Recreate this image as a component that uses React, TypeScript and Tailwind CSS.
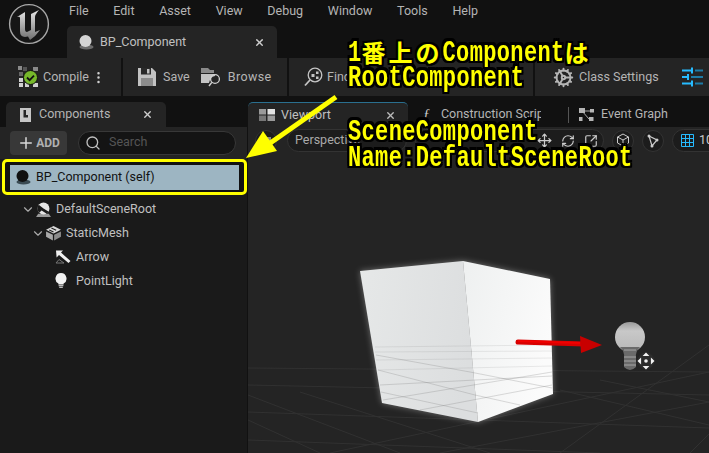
import { X, Search, Plus, ChevronDown, EllipsisVertical, Move, RefreshCw, SquareArrowOutUpRight, Cog } from "lucide-react";

const font = { fontFamily: "Roboto, sans-serif" };

function BallIcon({ dark }: { dark?: boolean }) {
  return (
    <svg width="18" height="18" viewBox="0 0 18 18" className="shrink-0">
      <ellipse cx="9.5" cy="14" rx="7" ry="2.6" fill={dark ? "#3a4a52" : "#6b6b6b"} />
      <circle cx="8.5" cy="8" r="6" fill={dark ? "#111" : "#d4d4d4"} />
    </svg>
  );
}

function Logo() {
  return (
    <svg width="42" height="42" viewBox="0 0 42 42" className="shrink-0">
      <defs>
        <linearGradient id="ulogo" x1="0" y1="0" x2="0" y2="1">
          <stop offset="0" stopColor="#e8e8e8" />
          <stop offset="1" stopColor="#6f6f6f" />
        </linearGradient>
      </defs>
      <circle cx="21" cy="21" r="19.4" fill="#161616" stroke="#a8a8a8" strokeWidth="1.4" />
      <path d="M9 14 L17 9 L17 26 Q17 29 19 29 L23 27 L23 11 L31 7 Q26.5 12 27 15 L27 29 L32 27 Q28 33 22 37 L20 33.5 Q12 35.5 12 28 L12 15 Q12 13 9 14 Z" fill="url(#ulogo)" />
    </svg>
  );
}

function CompileIcon() {
  return (
    <svg width="22" height="22" viewBox="0 0 22 22" className="shrink-0">
      <g fill="#8a8a8a">
        <rect x="0" y="0" width="4" height="4" />
        <rect x="5" y="1" width="4" height="4" fill="#555" />
        <rect x="15" y="1" width="5" height="4" />
      </g>
      <g fill="#cfcfcf">
        <rect x="1" y="6" width="4" height="4" fill="#666" />
        <rect x="1" y="12" width="4" height="4" />
        <rect x="1" y="17" width="4" height="4" />
        <rect x="7" y="17" width="4" height="4" />
        <rect x="15" y="17" width="5" height="4" />
      </g>
      <circle cx="12.5" cy="11.5" r="7" fill="#76b82a" stroke="#111" strokeWidth="1" />
      <path d="M9 11.5 l2.6 2.6 L16 9.6" fill="none" stroke="#111" strokeWidth="1.8" />
    </svg>
  );
}

function SaveIcon() {
  return (
    <svg width="18" height="18" viewBox="0 0 18 18" className="shrink-0">
      <path d="M0 0 H14 L18 4 V18 H0 Z" fill="#c2c2c2" />
      <rect x="3" y="0" width="10" height="6.5" fill="#2a2a2a" />
      <rect x="9" y="1" width="2.5" height="4.5" fill="#c2c2c2" />
      <rect x="3" y="10" width="12" height="8" fill="#8c8c8c" />
    </svg>
  );
}

function BrowseIcon() {
  return (
    <svg width="21" height="20" viewBox="0 0 21 20" className="shrink-0">
      <path d="M0 1 H7 L9 3 H13 V6 H0 Z" fill="#8a8a8a" />
      <path d="M0 7 H14 V9 Q9 10 8 16 H0 Z" fill="#c4c4c4" />
      <circle cx="14" cy="12" r="4.4" fill="none" stroke="#d0d0d0" strokeWidth="1.3" />
      <path d="M10.8 15.4 L8 19" stroke="#d0d0d0" strokeWidth="1.4" />
    </svg>
  );
}

function FindIcon() {
  return (
    <svg width="20" height="20" viewBox="0 0 20 20" className="shrink-0">
      <circle cx="12" cy="8" r="6.8" fill="none" stroke="#c4c4c4" strokeWidth="1.3" />
      <path d="M7 13 L2 18.5" stroke="#c4c4c4" strokeWidth="1.8" />
      <rect x="8.5" y="7" width="3" height="3" fill="#c4c4c4" />
      <rect x="13" y="4.5" width="2.5" height="2.5" fill="#c4c4c4" />
      <rect x="13" y="9.5" width="2.5" height="2.5" fill="#c4c4c4" />
    </svg>
  );
}

function SlidersIcon() {
  const blue = "#26bbff";
  const dim = "#1d7ba6";
  return (
    <svg width="22" height="20" viewBox="0 0 22 20" className="shrink-0">
      <path d="M0 3.5 H10 M0 10 H6 M0 16.5 H10" stroke={blue} strokeWidth="2" />
      <path d="M10 0.5 V6.5 M6 7 V13 M10 13.5 V19.5" stroke={blue} strokeWidth="2" />
      <path d="M13 3.5 H21 M9 10 H21 M13 16.5 H21" stroke={dim} strokeWidth="2" />
    </svg>
  );
}

function ViewportIcon() {
  return (
    <svg width="16" height="12" viewBox="0 0 16 12" className="shrink-0">
      <rect x="0" y="0" width="7" height="5.5" fill="#9a9a9a" />
      <rect x="8.5" y="0" width="7.5" height="5.5" fill="#e2e2e2" />
      <rect x="0" y="6.5" width="7" height="5.5" fill="#777" />
      <rect x="8.5" y="6.5" width="7.5" height="5.5" fill="#9a9a9a" />
    </svg>
  );
}

function GraphIcon() {
  return (
    <svg width="15" height="14" viewBox="0 0 15 14" className="shrink-0">
      <path d="M3 3 H11 M3 3 L10 11" stroke="#aaa" strokeWidth="1" />
      <rect x="0" y="0" width="6" height="5" fill="#b5b5b5" />
      <rect x="11" y="1" width="4" height="3.5" fill="#b5b5b5" />
      <rect x="0" y="9" width="3.5" height="4" fill="#b5b5b5" />
      <rect x="10" y="9" width="4.5" height="4" fill="#b5b5b5" />
    </svg>
  );
}

function SceneIcon() {
  return (
    <svg width="17" height="17" viewBox="0 0 16 16" className="shrink-0">
      <path d="M1 15 H15 L13 12 H3 Z" fill="#999" />
      <circle cx="8" cy="7" r="5.6" fill="#e6e6e6" />
      <path d="M3.5 3.5 L8 7 L4 11 A 6 6 0 0 1 3.5 3.5 Z M8 7 L13 10 L11 12 L5.5 8.5 Z" fill="#1a1a1a" />
    </svg>
  );
}

function MeshIcon() {
  return (
    <svg width="17" height="16" viewBox="0 0 16 15" className="shrink-0">
      <path d="M8 1 L15 4.5 L8 8 L1 4.5 Z" fill="#d8d8d8" />
      <path d="M1 6 L7.4 9.2 V14.5 L1 11 Z" fill="#a8a8a8" />
      <path d="M15 6 L8.6 9.2 V14.5 L15 11 Z" fill="#8c8c8c" />
      <path d="M6 2.8 L10.5 5 M4 4.6 L8 6.6" stroke="#222" strokeWidth="1" />
    </svg>
  );
}

function ArrowIcon() {
  return (
    <svg width="16" height="14" viewBox="0 0 16 14" className="shrink-0">
      <path d="M1 0.5 H8 L6 2.6 L15.5 11 L13.5 13 L4 5 L1.6 7.5 Z" fill="#eee" />
      <path d="M1 13 L4 9.5 L9 13 Z" fill="none" stroke="#777" strokeWidth="1" />
    </svg>
  );
}

function BulbIcon() {
  return (
    <svg width="12" height="16" viewBox="0 0 12 16" className="shrink-0">
      <path d="M6 0 A5.6 5.6 0 0 1 8.6 10.5 V11.5 H3.4 V10.5 A5.6 5.6 0 0 1 6 0 Z" fill="#f2f2f2" />
      <path d="M3.6 12.6 H8.4 M4.2 14.4 H7.8" stroke="#bbb" strokeWidth="1.2" />
    </svg>
  );
}

function TreeRow({ indent, arrow, icon, label }: { indent: string; arrow?: boolean; icon: React.ReactNode; label: string }) {
  return (
    <div className={`flex h-6 items-center text-[12.5px] text-[#c0c0c0] ${indent}`}>
      <span className="flex w-[14px] shrink-0 items-center">
        {arrow && <ChevronDown size={15} strokeWidth={2} className="text-[#aaa]" />}
      </span>
      <span className="flex w-[19px] shrink-0 items-center">{icon}</span>
      <span className="ml-[2px]">{label}</span>
    </div>
  );
}

function Sep() {
  return <div className="h-full w-[2px] shrink-0 bg-[#111]" />;
}

function Scene() {
  const lines = [
    "M248 385 L709 395", "M248 412 L709 428", "M248 440 L600 453", "M440 453 L709 402", "M330 453 L709 372",
    "M560 453 L709 345", "M690 453 L709 434", "M248 420 L320 453", "M248 395 L400 453", "M300 392 L490 453",
    "M560 390 L709 425", "M600 380 L709 402", "M248 368 L709 372",
  ];
  return (
    <svg width="461" height="300" viewBox="248 153 461 300" className="block">
      <defs>
        <linearGradient id="leftFace" x1="0" y1="0" x2="1" y2="0.2">
          <stop offset="0" stopColor="#e6e8e8" />
          <stop offset="1" stopColor="#dcdedf" />
        </linearGradient>
        <linearGradient id="rightFace" x1="0" y1="0" x2="1" y2="0.4">
          <stop offset="0" stopColor="#eef0f0" />
          <stop offset="1" stopColor="#fbfbfb" />
        </linearGradient>
        <linearGradient id="bulbG" x1="0" y1="0" x2="0" y2="1">
          <stop offset="0" stopColor="#9a9a9a" />
          <stop offset="0.3" stopColor="#c8c8c8" />
          <stop offset="1" stopColor="#b8b8b8" />
        </linearGradient>
        <filter id="glow" x="-20%" y="-20%" width="140%" height="140%">
          <feGaussianBlur stdDeviation="3" />
        </filter>
      </defs>
      {lines.map((d) => (
        <path key={d} d={d} stroke="#313131" strokeWidth="1" fill="none" />
      ))}
      <polygon points="360,271 463,261 550,279 553,394 478,422 382,403" fill="#fff" opacity="0.35" filter="url(#glow)" />
      <polygon points="360,271 463,261 478,422 382,403" fill="url(#leftFace)" />
      <polygon points="463,261 550,279 553,394 478,422" fill="url(#rightFace)" />
      <g stroke="#777" strokeOpacity="0.14" strokeWidth="1" fill="none">
        <path d="M375 347 L552 345" />
        <path d="M375 352 L552 351" />
        <path d="M376 360 L552 358" />
        <path d="M378 370 L552 366" />
      </g>
      <g stroke="#777" strokeOpacity="0.26" strokeWidth="1" fill="none">
        <path d="M380 385 L552 376" />
        <path d="M383 400 L552 372" />
        <path d="M420 410 L552 385" />
        <path d="M376 355 L470 372 L552 388" />
        <path d="M378 370 L475 395 L520 405" />
        <path d="M381 392 L478 413" />
      </g>
      <path d="M518 342 L585 344" stroke="#d80000" strokeWidth="5" strokeLinecap="round" />
      <polygon points="580,336 602,345 581,353" fill="#c80000" />
      <path d="M518 341 L580 343" stroke="#f00000" strokeWidth="2" />
      <circle cx="630" cy="337" r="15" fill="url(#bulbG)" />
      <path d="M620 347 Q625 352 624 358 L624 367 Q630 373 636 367 L636 358 Q635 352 640 347 Z" fill="#6a6a6a" />
      <path d="M624 350 H636 M624 357 H636 M624 361 H636 M624 365 H636" stroke="#a5a5a5" strokeWidth="1" />
      <circle cx="646" cy="361" r="8.5" fill="#2c2c2c" />
      <path d="M646 352.5 l3.4 3.6 h-6.8 Z M646 369.5 l3.4 -3.6 h-6.8 Z M637.5 361 l3.6 -3.4 v6.8 Z M654.5 361 l-3.6 -3.4 v6.8 Z" fill="#f2f2f2" />
      <circle cx="646" cy="361" r="1.8" fill="#f2f2f2" />
    </svg>
  );
}

const noteText =
  "whitespace-pre font-bold text-[#ffff00] [text-shadow:2px_0_0_#000,-2px_0_0_#000,0_2px_0_#000,0_-2px_0_#000,2px_2px_0_#000,-2px_-2px_0_#000,2px_-2px_0_#000,-2px_2px_0_#000]";

function Latin({ children }: { children: React.ReactNode }) {
  return (
    <span className="inline-block origin-center scale-y-[1.35] text-[22px] tracking-[0.35px] [font-family:'Liberation_Mono',monospace]">
      {children}
    </span>
  );
}

function Cjk({ children }: { children: React.ReactNode }) {
  return (
    <span className="inline-block -translate-y-[2px] text-[24px] leading-[24px] tracking-[3px] [font-family:'Noto_Sans_CJK_JP',sans-serif]">{children}</span>
  );
}

function Note({ children }: { children: React.ReactNode }) {
  return <div className={`flex h-[24px] items-center leading-[24px] ${noteText}`}>{children}</div>;
}

export default function App() {
  return (
    <div className="relative flex h-[453px] w-[709px] flex-col overflow-hidden bg-[#111111] text-[12.5px] text-[#c0c0c0]" style={font}>
      {/* title + menu */}
      <div className="flex h-[58px] shrink-0">
        <div className="flex w-[67px] shrink-0 items-start pl-[8px] pt-[3px]">
          <Logo />
        </div>
        <div className="flex flex-col">
          <div className="flex h-[26px] items-center gap-[24.7px] pl-[2px] pb-[4px] text-[12.5px] text-[#b5b5b5]">
            <span>File</span>
            <span>Edit</span>
            <span>Asset</span>
            <span>View</span>
            <span>Debug</span>
            <span>Window</span>
            <span>Tools</span>
            <span>Help</span>
          </div>
          <div className="flex h-8 w-[210px] items-center rounded-t-[5px] bg-[#242424] pl-[10px] pr-[12px]">
            <BallIcon />
            <span className="ml-[5px] flex-1 text-[12.5px] text-[#c0c0c0]">BP_Component</span>
            <X size={11} strokeWidth={3} className="text-[#cfcfcf]" />
          </div>
        </div>
      </div>

      {/* toolbar */}
      <div className="flex h-[38px] shrink-0 items-center bg-[#242424] text-[#b5b5b5]">
        <div className="flex h-full w-[121px] shrink-0 items-center pl-[18px]">
          <CompileIcon />
          <span className="ml-[3px]">Compile</span>
          <EllipsisVertical size={15} className="ml-[2px] text-[#d0d0d0]" />
        </div>
        <Sep />
        <div className="flex h-full w-[164px] shrink-0 items-center pl-[15px]">
          <SaveIcon />
          <span className="ml-[7px]">Save</span>
          <span className="ml-[11px]"><BrowseIcon /></span>
          <span className="ml-[6px] tracking-[0.4px]">Browse</span>
        </div>
        <Sep />
        <div className="flex h-full w-[244px] shrink-0 items-center pl-[14px]">
          <FindIcon />
          <span className="ml-[4px]">Find</span>
        </div>
        <Sep />
        <div className="flex h-full flex-1 items-center pl-[18px]">
          <Cog size={21} strokeWidth={2.2} className="text-[#b5b5b5]" />
          <span className="ml-[5px]">Class Settings</span>
          <span className="ml-[23px]"><SlidersIcon /></span>
        </div>
      </div>

      {/* body */}
      <div className="flex min-h-0 flex-1 pt-[6px]">
        {/* left panel */}
        <div className="flex w-[247px] shrink-0 flex-col">
          <div className="ml-[6px] flex h-[25px] w-[160px] shrink-0 items-center rounded-t-[5px] bg-[#242424] pl-[14px] pr-[13px]">
            <svg width="11" height="14" viewBox="0 0 11 14" className="shrink-0">
              <path d="M0 0 H11 V14 H0 Z M3.5 2 V9.5 H8 V7 H6 V2 Z" fill="#c6c6c6" fillRule="evenodd" />
            </svg>
            <span className="ml-[8px] flex-1 text-[#b5b5b5]">Components</span>
            <X size={11} strokeWidth={3} className="text-[#cfcfcf]" />
          </div>
          <div className="flex flex-1 flex-col bg-[#1a1a1a]">
            <div className="flex h-[32px] shrink-0 items-center bg-[#242424] pb-[1px] pl-[10px] pr-[11px]">
              <div className="flex h-6 w-[57px] items-center justify-center rounded-[4px] bg-[#383838] text-[12px] font-bold text-[#b0b0b0]">
                <Plus size={18} strokeWidth={2} className="mr-[1px] text-[#d8d8d8]" />
                ADD
              </div>
              <div className="ml-[11px] flex h-6 flex-1 items-center rounded-full border border-[#383838] bg-[#141414] pl-[6px]">
                <Search size={16} className="text-[#c0c0c0]" />
                <span className="ml-[8px] text-[#555]">Search</span>
              </div>
            </div>
            <div className="ml-[2px] flex h-9 w-[245px] shrink-0 items-center rounded-[5px] border-[3px] border-[#ffff00] bg-[#111] px-[5px]">
              <div className="flex h-[25px] flex-1 items-center bg-[#9db5c2] pl-[4px] text-[12.5px] text-[#111]">
                <BallIcon dark />
                <span className="ml-[4px]">BP_Component (self)</span>
              </div>
            </div>
            <div className="pt-[2px]">
              <TreeRow indent="pl-[21px]" arrow icon={<SceneIcon />} label="DefaultSceneRoot" />
              <TreeRow indent="pl-[31px]" arrow icon={<MeshIcon />} label="StaticMesh" />
              <TreeRow indent="pl-[41px]" icon={<ArrowIcon />} label="Arrow" />
              <TreeRow indent="pl-[41px]" icon={<BulbIcon />} label="PointLight" />
            </div>
          </div>
        </div>

        {/* right panel */}
        <div className="ml-[1px] flex min-w-0 flex-1 flex-col">
          <div className="flex h-[25px] shrink-0 items-center text-[#b5b5b5]">
            <div className="flex h-full w-[160px] shrink-0 items-center rounded-t-[5px] border-t border-[#2a6f8f] bg-[#242424] pl-[11px] pr-[12px]">
              <ViewportIcon />
              <span className="ml-[6px] flex-1 text-[#c0c0c0]">Viewport</span>
              <X size={11} strokeWidth={3} className="text-[#bbb]" />
            </div>
            <div className="flex w-[161px] shrink-0 items-center overflow-hidden whitespace-nowrap pl-[15px]">
              <span className="mr-[8px] w-[10px] text-[14px] italic text-[#ccc] [font-family:'Liberation_Serif',serif]">ƒ</span>
              <span className="w-[101px] overflow-hidden">Construction Script</span>
              <span className="ml-[27px] h-[16px] w-[1px] shrink-0 bg-[#555]" />
            </div>
            <div className="flex items-center pl-[10px]">
              <GraphIcon />
              <span className="ml-[7px]">Event Graph</span>
            </div>
          </div>
          <div className="relative min-h-0 flex-1 bg-[#242424]">
            <div className="flex h-[26px] items-center pl-[7px] pt-[1px]">
              <div className="flex h-[22px] w-[22px] shrink-0 items-center justify-center rounded-full border border-[#333] bg-[#1c1c1c]">
                <span className="h-[8px] w-[10px] bg-[#888]" />
              </div>
              <div className="ml-[10px] flex h-[23px] w-[120px] shrink-0 items-center rounded-full border border-[#333] bg-[#1c1c1c] pl-[7px] text-[#aaa]">
                Perspective
              </div>
              <div className="ml-[8px] flex h-[23px] w-[189px] shrink-0 items-center justify-end gap-[9px] rounded-full border border-[#333] bg-[#1c1c1c] pr-[5px] text-[#ccc]">
                <Move size={15} />
                <RefreshCw size={14} />
                <SquareArrowOutUpRight size={14} />
              </div>
              <div className="ml-[8px] flex h-[22px] w-[22px] shrink-0 items-center justify-center rounded-full border border-[#333] bg-[#1c1c1c]">
                <svg width="14" height="15" viewBox="0 0 14 15">
                  <path d="M7 1 L12.5 4 V10 L7 13 L1.5 10 V4 Z M1.5 4 L7 7 L12.5 4 M7 7 V13" fill="none" stroke="#ccc" strokeWidth="1" />
                </svg>
              </div>
              <div className="ml-[8px] flex h-[22px] w-[22px] shrink-0 items-center justify-center rounded-full border border-[#333] bg-[#1c1c1c]">
                <svg width="14" height="14" viewBox="0 0 14 14">
                  <path d="M3 2 L11 6 L6 12 Z" fill="none" stroke="#ccc" strokeWidth="1.2" />
                  <circle cx="3" cy="2" r="1.5" fill="#ccc" />
                  <circle cx="11" cy="6" r="1.5" fill="#ccc" />
                  <circle cx="6" cy="12" r="1.5" fill="#ccc" />
                </svg>
              </div>
              <div className="ml-[8px] flex h-[23px] flex-1 items-center rounded-l-full border border-[#333] bg-[#1c1c1c] pl-[8px] text-[#ccc]">
                <svg width="13" height="13" viewBox="0 0 13 13" className="mr-[5px] shrink-0">
                  <path d="M.5 .5 H12.5 V12.5 H.5 Z M4.5 .5 V12.5 M8.5 .5 V12.5 M.5 4.5 H12.5 M.5 8.5 H12.5" fill="none" stroke="#26bbff" strokeWidth="1" />
                </svg>
                10
              </div>
            </div>
            <Scene />
          </div>
        </div>
      </div>

      {/* annotation overlays */}
      <svg width="709" height="453" viewBox="0 0 709 453" className="pointer-events-none absolute left-0 top-0">
        <path d="M336 97 L266 146" stroke="#ffff00" strokeWidth="5" fill="none" />
        <polygon points="246,158 263,131 277,151" fill="#ffff00" />
      </svg>
      <div className="absolute left-[348px] top-[42px] flex flex-col-reverse">
        <div className="mt-[1px]"><Note><Latin>RootComponent</Latin></Note></div>
        <Note><Latin>1</Latin><Cjk>番上の</Cjk><Latin>Component</Latin><Cjk>は</Cjk></Note>
      </div>
      <div className="absolute left-[348px] top-[121px]">
        <Note><Latin>SceneComponent</Latin></Note>
        <div className="mt-[2px]"><Note><Latin>Name:DefaultSceneRoot</Latin></Note></div>
      </div>
    </div>
  );
}
